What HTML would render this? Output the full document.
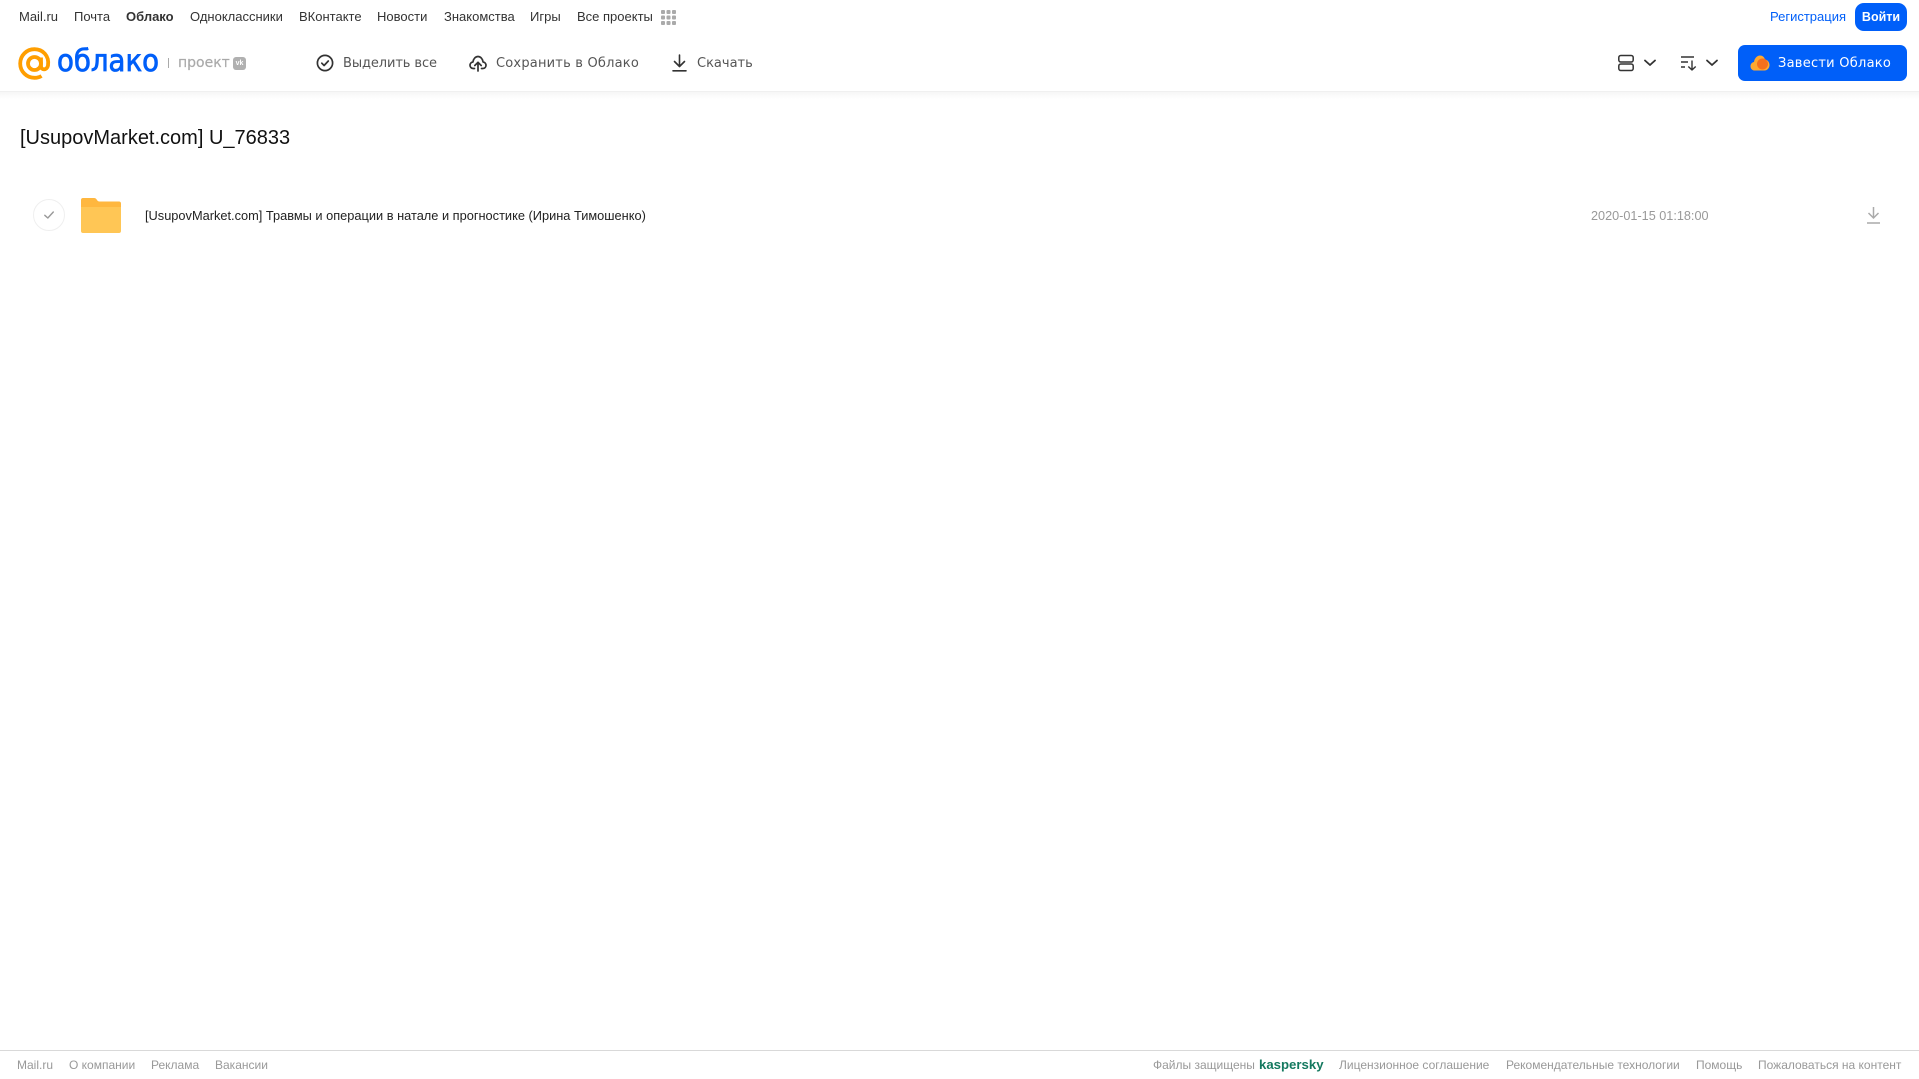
<!DOCTYPE html>
<html lang="ru"><head><meta charset="utf-8"><title>Облако</title>
<style>
html,body{margin:0;padding:0;background:#fff;width:1919px;height:1079px;overflow:hidden;font-family:"Liberation Sans",Arial,sans-serif}
.t{position:absolute;white-space:nowrap;line-height:20px;height:20px}
.n{top:7px;font-size:13px;color:#333}
.h{top:54px;color:#555;font-family:"DejaVu Sans","Liberation Sans",sans-serif;font-size:13px}
.f{top:1055px;font-size:12px;color:#999}
svg{position:absolute;display:block}
</style></head><body>
<span class="t n" style="left:19px">Mail.ru</span>
<span class="t n" style="left:74px">Почта</span>
<span class="t n" style="left:126px;font-weight:bold">Облако</span>
<span class="t n" style="left:190px">Одноклассники</span>
<span class="t n" style="left:299px">ВКонтакте</span>
<span class="t n" style="left:377px">Новости</span>
<span class="t n" style="left:444px">Знакомства</span>
<span class="t n" style="left:530px">Игры</span>
<span class="t n" style="left:577px">Все проекты</span>
<svg style="left:661px;top:10px" width="15" height="15" fill="#aaa"><rect x="0" y="0" width="4" height="4" rx="1"/><rect x="5.500" y="0" width="4" height="4" rx="1"/><rect x="11" y="0" width="4" height="4" rx="1"/><rect x="0" y="5.500" width="4" height="4" rx="1"/><rect x="5.500" y="5.500" width="4" height="4" rx="1"/><rect x="11" y="5.500" width="4" height="4" rx="1"/><rect x="0" y="11" width="4" height="4" rx="1"/><rect x="5.500" y="11" width="4" height="4" rx="1"/><rect x="11" y="11" width="4" height="4" rx="1"/></svg>
<span class="t n" style="left:1770px;color:#005ff9">Регистрация</span>
<div style="position:absolute;left:1855px;top:3px;width:52px;height:28px;background:#005ff9;border-radius:9px;color:#fff;font-size:12.500px;font-weight:bold;line-height:28px;text-align:center">Войти</div>

<div style="position:absolute;left:0;top:91px;width:1919px;height:1px;background:#f0f0f0"></div>
<div style="position:absolute;left:0;top:92px;width:1919px;height:7px;background:linear-gradient(#f6f6f6,#fff)"></div>

<svg style="left:17px;top:46px" width="35" height="35" viewBox="0 0 35 35" fill="none" stroke="#ff9e00" stroke-width="3.800"><circle cx="17.500" cy="17.500" r="6.500"/><path d="M24 11.500v8.500c0 4.500 6 4.500 7-.5C32.500 9.500 25.500 3.200 17.500 3.200 9.500 3.200 3.200 9.500 3.200 17.500S9.500 31.800 17.500 31.800c2.800 0 5.200-.7 7-1.900"/></svg>
<span class="t" style="left:57px;top:44px;height:36px;line-height:36px;font-size:30px;color:#005ff9;font-family:'DejaVu Sans',sans-serif;-webkit-text-stroke:.8px #005ff9;transform-origin:0 50%;transform:scaleX(.92)">облако</span>
<div style="position:absolute;left:168px;top:58px;width:1px;height:10px;background:#aaa"></div>
<span class="t" style="left:178px;top:53px;font-size:14px;font-family:'DejaVu Sans',sans-serif;color:#aaa;-webkit-text-stroke:.2px #aaa">проект</span>
<div style="position:absolute;left:233px;top:57px;width:13px;height:13px;border-radius:3px;background:#b0b0b0;color:#fff;font-size:7px;font-weight:bold;line-height:13px;text-align:center">vk</div>

<svg style="left:316px;top:54px" width="18" height="18" fill="none" stroke="#333" stroke-width="1.700" stroke-linecap="round" stroke-linejoin="round"><circle cx="9" cy="9" r="7.600"/><path d="M5.800 9.200l2.300 2.300 4.200-4.500"/></svg>
<span class="t h" style="left:343px;letter-spacing:-.1px">Выделить все</span>
<svg style="left:469px;top:54px" width="18" height="18" fill="none" stroke="#333" stroke-width="1.700" stroke-linecap="round" stroke-linejoin="round"><path d="M5.500 14.500H4.200C2 14.500 1 12.800 1 11.300c0-1.800 1.300-3.100 2.900-3.300C4.300 4.800 6.500 2.500 9 2.500S13.700 4.800 14.100 8c1.600.2 2.900 1.500 2.900 3.300 0 1.500-1 3.200-3.200 3.200h-1.300"/><path d="M9 17V8.500M5.800 11.500L9 8.300l3.200 3.200"/></svg>
<span class="t h" style="left:496px;letter-spacing:.2px">Сохранить в Облако</span>
<svg style="left:671px;top:54px" width="17" height="18" fill="none" stroke="#333" stroke-width="1.600" stroke-linecap="round" stroke-linejoin="round"><path d="M8.500 1v11M3.500 7.500l5 5 5-5M2 16.800h13"/></svg>
<span class="t h" style="left:697px">Скачать</span>

<svg style="left:1617px;top:54px" width="18" height="18" fill="none" stroke="#333" stroke-width="1.500"><rect x="1.800" y="1.500" width="14.400" height="6.500" rx="2"/><rect x="1.800" y="10" width="14.400" height="6.500" rx="2"/></svg>
<svg style="left:1643px;top:58px" width="14" height="10" fill="none" stroke="#333" stroke-width="1.800" stroke-linecap="round" stroke-linejoin="round"><path d="M2 2.500L7 7l5-4.500"/></svg>
<svg style="left:1680px;top:54px" width="18" height="18" fill="none" stroke="#333" stroke-width="1.400" stroke-linejoin="round"><path d="M1 3h13M1 8h7M1 13h4M12 6.500V16M8.300 12.500L12 16l3.700-3.500"/></svg>
<svg style="left:1705px;top:58px" width="14" height="10" fill="none" stroke="#333" stroke-width="1.800" stroke-linecap="round" stroke-linejoin="round"><path d="M2 2.500L7 7l5-4.500"/></svg>
<div style="position:absolute;left:1738px;top:45px;width:169px;height:36px;background:#005ff9;border-radius:7px"></div>
<svg style="left:1750px;top:54px" width="20" height="18"><path d="M5 16.500C2 16.500.5 14.500.5 12.200.5 10 2 8.300 4 8 4.500 4.300 7 1.500 10 1.500c2.500 0 4.300 1.600 5 4 2.500.3 4.500 2.600 4.500 5.500 0 3-2.200 5.500-5 5.500z" fill="#ffa930"/><circle cx="12.500" cy="10" r="5.500" fill="#f5701e"/></svg>
<span class="t h" style="left:1778px;color:#fff;letter-spacing:.25px">Завести Облако</span>

<div class="t" style="left:20px;top:125px;height:26px;line-height:26px;font-size:20px;color:#111">[UsupovMarket.com] U_76833</div>

<svg style="left:32px;top:198px" width="34" height="34" fill="none"><circle cx="17" cy="17" r="15.500" stroke="#efefef" stroke-width="1"/><path d="M12.800 17.300l3 2.700 5.500-6" stroke="#999" stroke-width="1.400" stroke-linecap="round" stroke-linejoin="round"/></svg>
<svg style="left:81px;top:198px" width="40" height="35"><path d="M2 0h11c1.500 0 2.200.7 3 2 .6 1 1.300 1.500 2.500 1.500H38c1.200 0 2 .8 2 2V10H0V2C0 .8.800 0 2 0z" fill="#ffb73f"/><path d="M0 9h40v24c0 1.200-.8 2-2 2H2c-1.200 0-2-.8-2-2z" fill="#ffc655"/></svg>
<div class="t" style="left:145px;top:206px;font-size:12.800px;color:#222">[UsupovMarket.com] Травмы и операции в натале и прогностике (Ирина Тимошенко)</div>
<div class="t" style="left:1591px;top:206px;font-size:12.660px;color:#999">2020-01-15 01:18:00</div>
<svg style="left:1866px;top:206px" width="15" height="18" fill="none" stroke="#aaa" stroke-width="1.500"><path d="M7.500 1v11M2.500 7l5 5 5-5M1 17h13"/></svg>

<div style="position:absolute;left:0;top:1050px;width:1919px;height:1px;background:#d9d9d9"></div>
<span class="t f" style="left:17px">Mail.ru</span>
<span class="t f" style="left:69px">О компании</span>
<span class="t f" style="left:151px">Реклама</span>
<span class="t f" style="left:215px">Вакансии</span>
<span class="t f" style="left:1153px">Файлы защищены</span>
<span class="t f" style="left:1259px;font-weight:bold;font-size:13.200px;color:#14795f">kaspersky</span>
<span class="t f" style="left:1339px">Лицензионное соглашение</span>
<span class="t f" style="left:1506px">Рекомендательные технологии</span>
<span class="t f" style="left:1696px">Помощь</span>
<span class="t f" style="left:1758px">Пожаловаться на контент</span>
</body></html>
